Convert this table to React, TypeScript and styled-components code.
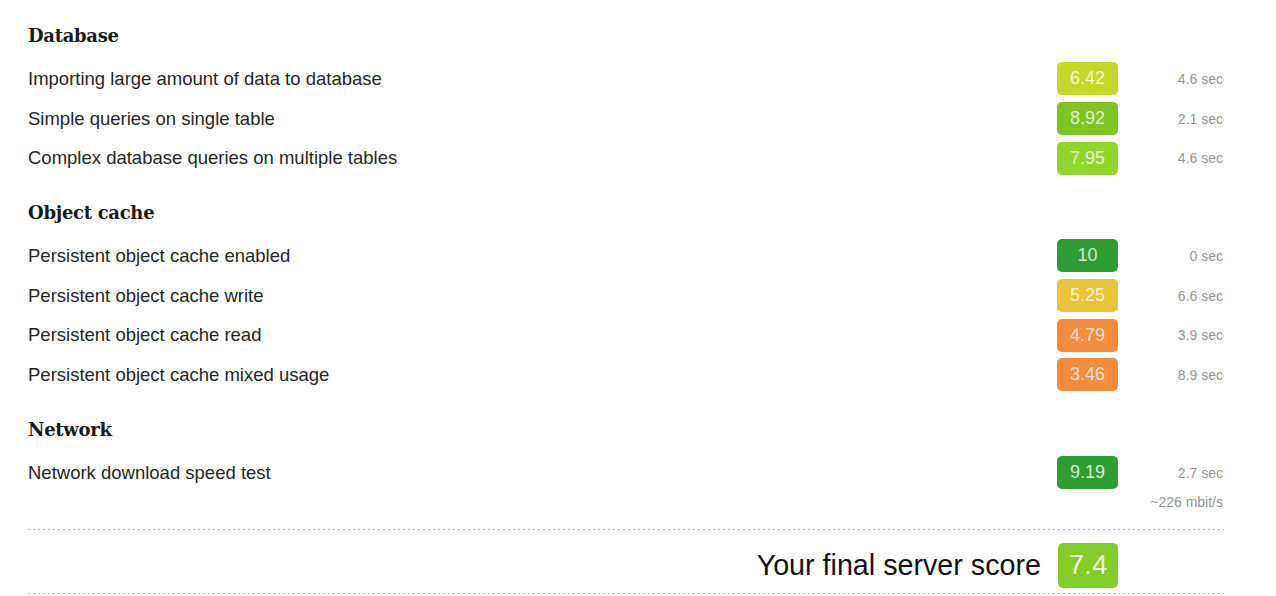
import React from "react";
import styled, { createGlobalStyle } from "styled-components";

const Global = createGlobalStyle`
  html, body { margin: 0; padding: 0; background: #fff; }
  body { font-family: "Liberation Sans", Arial, sans-serif; color: #222; }
`;

const Page = styled.div`
  width: 1196px;
  padding: 24px 0 0 28px;
`;

const Section = styled.section`
  margin-bottom: 23px;
  &:last-of-type { margin-bottom: 0; }
`;

const Heading = styled.h3`
  margin: 0 0 11px;
  height: 24px;
  line-height: 24px;
  font-family: "DejaVu Serif", "Liberation Serif", serif;
  font-weight: bold;
  font-size: 18px;
  color: #1a1a1a;
  letter-spacing: -0.3px;
`;

const Row = styled.div`
  display: grid;
  grid-template-columns: 1fr 61px 106px;
  align-items: center;
  height: 39.7px;
`;

const Label = styled.div`
  font-size: 18.5px;
  color: #262626;
`;

const Badge = styled.div<{ $bg: string }>`
  height: 33px;
  border-radius: 5px;
  background: ${(p) => p.$bg};
  color: rgba(255, 255, 255, 0.8);
  font-size: 18px;
  display: flex;
  align-items: center;
  justify-content: center;
`;

const Time = styled.div`
  text-align: right;
  padding-right: 1px;
  font-size: 14px;
  color: #959595;
`;

const Note = styled.div`
  text-align: right;
  padding-right: 1px;
  font-size: 14px;
  color: #959595;
  height: 18px;
  line-height: 18px;
`;

const Dotted = styled.div<{ $top?: number }>`
  height: 1px;
  margin-top: ${(p) => p.$top ?? 0}px;
  background-image: linear-gradient(to right, #b0b0b0 0 2px, transparent 2px 5px);
  background-size: 5px 1px;
  background-repeat: repeat-x;
`;

const Final = styled.div`
  display: flex;
  align-items: center;
  justify-content: flex-end;
  gap: 17px;
  padding: 13px 106px 5px 0;
`;

const FinalText = styled.div`
  font-size: 28.7px;
  line-height: 34px;
  color: #111;
`;

const FinalBadge = styled.div`
  width: 60px;
  height: 45px;
  border-radius: 5px;
  background: #84cc28;
  color: rgba(255, 255, 255, 0.88);
  font-size: 28px;
  display: flex;
  align-items: center;
  justify-content: center;
`;

type Item = { label: string; score: string; bg: string; time: string };

const sections: { title: string; items: Item[] }[] = [
  {
    title: "Database",
    items: [
      { label: "Importing large amount of data to database", score: "6.42", bg: "#c4d82a", time: "4.6 sec" },
      { label: "Simple queries on single table", score: "8.92", bg: "#7cc522", time: "2.1 sec" },
      { label: "Complex database queries on multiple tables", score: "7.95", bg: "#8fd52c", time: "4.6 sec" },
    ],
  },
  {
    title: "Object cache",
    items: [
      { label: "Persistent object cache enabled", score: "10", bg: "#2e9e33", time: "0 sec" },
      { label: "Persistent object cache write", score: "5.25", bg: "#e9c43a", time: "6.6 sec" },
      { label: "Persistent object cache read", score: "4.79", bg: "#f58c3c", time: "3.9 sec" },
      { label: "Persistent object cache mixed usage", score: "3.46", bg: "#f58c3c", time: "8.9 sec" },
    ],
  },
  {
    title: "Network",
    items: [
      { label: "Network download speed test", score: "9.19", bg: "#2e9e33", time: "2.7 sec" },
    ],
  },
];

export default function App() {
  return (
    <Page>
      <Global />
      {sections.map((s) => (
        <Section key={s.title}>
          <Heading>{s.title}</Heading>
          {s.items.map((it) => (
            <Row key={it.label}>
              <Label>{it.label}</Label>
              <Badge $bg={it.bg}>{it.score}</Badge>
              <Time>{it.time}</Time>
            </Row>
          ))}
          {s.title === "Network" && <Note>~226 mbit/s</Note>}
        </Section>
      ))}
      <Dotted $top={18} />
      <Final>
        <FinalText>Your final server score</FinalText>
        <FinalBadge>7.4</FinalBadge>
      </Final>
      <Dotted />
    </Page>
  );
}
